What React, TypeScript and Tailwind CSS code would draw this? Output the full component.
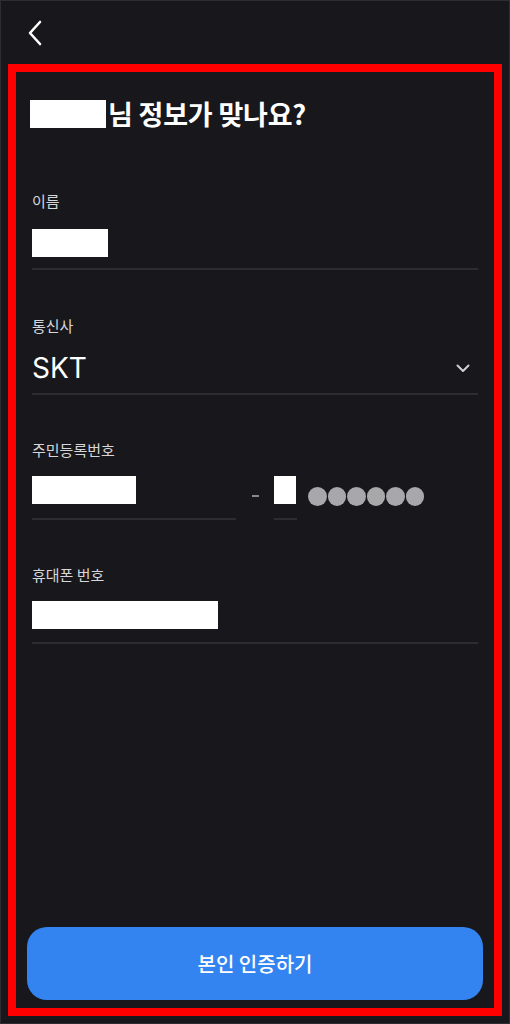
import React from "react";

const font = { fontFamily: '"Noto Sans CJK KR", "Noto Sans", sans-serif' };

function Field({ label, children, line = true }: { label: string; children: React.ReactNode; line?: boolean }) {
  return (
    <div className="flex flex-col">
      <div className="text-[15px] leading-[20px] text-[#d6d6da]">{label}</div>
      {children}
      {line && <div className="h-[2px] bg-[#2c2c31]" />}
    </div>
  );
}

export default function App() {
  return (
    <div
      className="w-[510px] h-[1024px] bg-[#18181c] border border-[#2e2e32] flex flex-col overflow-hidden"
      style={font}
    >
      <header className="h-[63px] shrink-0 flex items-center pl-[26px]">
        <svg width="16" height="26" viewBox="0 0 16 26" fill="none">
          <path d="M13 2 L3 13 L13 24" stroke="#ffffff" strokeWidth="2.6" strokeLinecap="round" strokeLinejoin="round" />
        </svg>
      </header>

      <main className="mx-[7px] flex-1 mb-[7px] border-[8px] border-[#ff0000] flex flex-col px-[16px]">
        <div className="mt-[25px] h-[34px] flex items-center -ml-[2px]">
          <div className="w-[76px] h-[28px] bg-white" />
          <span className="ml-[2px] text-[27px] font-bold text-white leading-[34px] tracking-[-0.2px]">님 정보가 맞나요?</span>
        </div>

        <div className="mt-[60px]">
          <Field label="이름">
            <div className="mt-[18px] w-[76px] h-[28px] bg-white" />
            <div className="h-[11px]" />
          </Field>
        </div>

        <div className="mt-[46px]">
          <Field label="통신사">
            <div className="mt-[15px] h-[34px] flex items-center justify-between pr-[8px]">
              <span className="text-[28px] leading-[34px] font-normal text-white" style={{ fontFamily: 'Inter, "Noto Sans", sans-serif' }}>
                SKT
              </span>
              <svg width="14" height="9" viewBox="0 0 14 9" fill="none">
                <path d="M1.5 1.5 L7 7 L12.5 1.5" stroke="#d0d0d4" strokeWidth="2" strokeLinecap="round" strokeLinejoin="round" />
              </svg>
            </div>
            <div className="h-[8px]" />
          </Field>
        </div>

        <div className="mt-[45px] flex flex-col">
          <div className="text-[15px] leading-[20px] text-[#d6d6da]">주민등록번호</div>
          <div className="mt-[16px] flex items-start">
            <div className="w-[204px] flex flex-col">
              <div className="w-[104px] h-[28px] bg-white" />
              <div className="mt-[14px] h-[2px] bg-[#2c2c31]" />
            </div>
            <div className="ml-[16px] mt-[19px] w-[7px] h-[2px] bg-[#8a8a8e]" />
            <div className="ml-[15px] w-[23px] flex flex-col">
              <div className="w-[22px] h-[28px] bg-white" />
              <div className="mt-[14px] h-[2px] bg-[#2c2c31]" />
            </div>
            <div className="ml-[11px] mt-[11px] flex gap-[1px]">
              {[0, 1, 2, 3, 4, 5].map((i) => (
                <div key={i} className="w-[18.5px] h-[18.5px] rounded-full bg-[#a8a8ab]" />
              ))}
            </div>
          </div>
        </div>

        <div className="mt-[45px]">
          <Field label="휴대폰 번호">
            <div className="mt-[16px] w-[186px] h-[28px] bg-white" />
            <div className="h-[13px]" />
          </Field>
        </div>

        <div className="flex-1" />

        <button className="mx-[-5px] mb-[8px] h-[73px] rounded-[20px] bg-[#3384f0] text-white text-[20px] font-medium flex items-center justify-center">
          본인 인증하기
        </button>
      </main>
    </div>
  );
}
